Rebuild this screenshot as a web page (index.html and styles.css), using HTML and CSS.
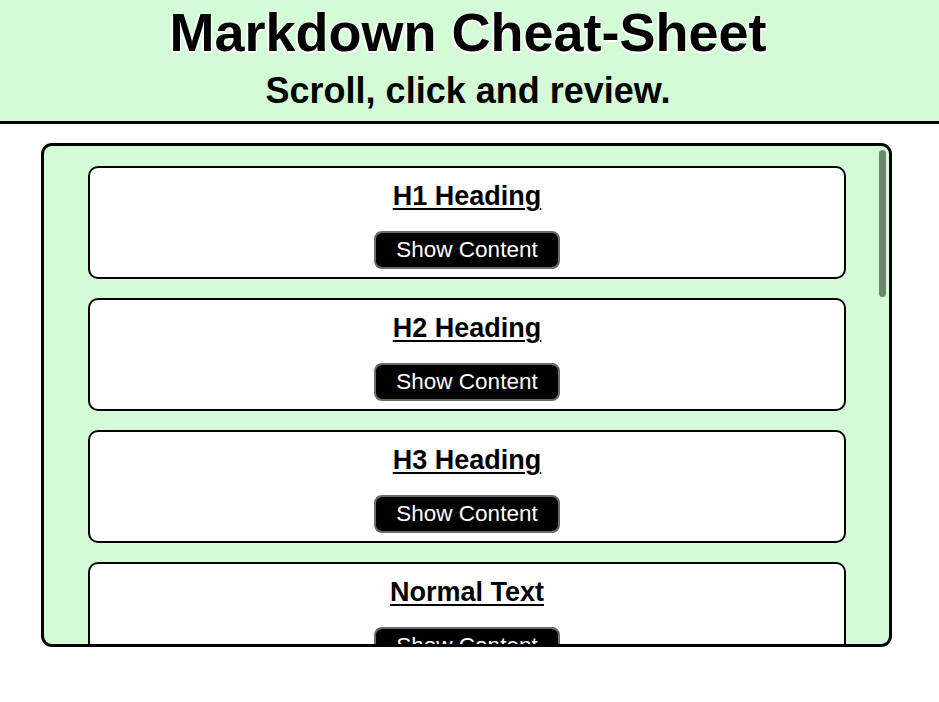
FILE: index.html
```html
<!DOCTYPE html>
<html lang="en">
<head>
<meta charset="utf-8">
<title>Markdown Cheat-Sheet</title>
<link rel="stylesheet" href="styles.css">
</head>
<body>
<header class="page-header">
  <h1 class="title">Markdown Cheat-Sheet</h1>
  <h2 class="subtitle">Scroll, click and review.</h2>
</header>
<main class="sheet">
  <div class="sheet-scroll">
    <section class="card"><h3 class="card-title">H1 Heading</h3><button class="show-btn">Show Content</button></section>
    <section class="card"><h3 class="card-title">H2 Heading</h3><button class="show-btn">Show Content</button></section>
    <section class="card"><h3 class="card-title">H3 Heading</h3><button class="show-btn">Show Content</button></section>
    <section class="card"><h3 class="card-title">Normal Text</h3><button class="show-btn">Show Content</button></section>
    <section class="card"><h3 class="card-title">Bold Text</h3><button class="show-btn">Show Content</button></section>
    <section class="card"><h3 class="card-title">Italic Text</h3><button class="show-btn">Show Content</button></section>
    <section class="card"><h3 class="card-title">Blockquote</h3><button class="show-btn">Show Content</button></section>
    <section class="card"><h3 class="card-title">Ordered List</h3><button class="show-btn">Show Content</button></section>
    <section class="card"><h3 class="card-title">Unordered List</h3><button class="show-btn">Show Content</button></section>
    <section class="card"><h3 class="card-title">Code</h3><button class="show-btn">Show Content</button></section>
    <section class="card"><h3 class="card-title">Horizontal Rule</h3><button class="show-btn">Show Content</button></section>
    <section class="card"><h3 class="card-title">Link</h3><button class="show-btn">Show Content</button></section>
    <section class="card"><h3 class="card-title">Image</h3><button class="show-btn">Show Content</button></section>
  </div>
  <div class="scroll-thumb" aria-hidden="true"></div>
</main>
</body>
</html>
```

FILE: styles.css
```css
* {
  box-sizing: border-box;
}

body {
  margin: 0;
  background: #ffffff;
  font-family: "Liberation Sans", Arial, Helvetica, sans-serif;
  color: #000;
}

.page-header {
  background: #d3fbd6;
  border-bottom: 3px solid #000;
  padding: 1px 3px 9px 0;
  text-align: center;
}

.title {
  margin: 0;
  font-size: 54px;
  line-height: 62px;
  font-weight: bold;
  text-shadow: 0 0 2px #fff, 1px 2px 1px #fff, -1px 2px 1px #fff, -2px 1px 1px #fff;
}

.subtitle {
  margin: 7px 0 0;
  font-size: 36px;
  line-height: 42px;
  font-weight: bold;
}

.sheet {
  position: relative;
  margin: 19px 0 0 41px;
  width: 851px;
  height: 504px;
  background: #d3fbd6;
  border: 3px solid #000;
  border-radius: 11px;
  overflow: hidden;
}

.sheet-scroll {
  height: 100%;
  overflow-y: scroll;
  scrollbar-width: none;
  padding: 20px 43px 20px 44px;
  display: flex;
  flex-direction: column;
  gap: 19px;
}

.sheet-scroll::-webkit-scrollbar {
  display: none;
}

.scroll-thumb {
  position: absolute;
  top: 4px;
  right: 3px;
  width: 7px;
  height: 147px;
  border-radius: 4px;
  background: #6c856f;
}

.card {
  flex: none;
  height: 113px;
  background: #fff;
  border: 2px solid #000;
  border-radius: 10px;
  padding: 13px 0 8px;
  display: flex;
  flex-direction: column;
  align-items: center;
}

.card-title {
  margin: 0;
  font-size: 27px;
  line-height: 30px;
  font-weight: bold;
  text-decoration: underline;
  text-decoration-thickness: 2px;
  text-underline-offset: 3px;
}

.show-btn {
  margin-top: 20px;
  height: 38px;
  padding: 5px 20px;
  background: #000;
  color: #fff;
  border: 2px solid #6b6b6b;
  border-radius: 8px;
  font-family: "Liberation Sans", Arial, Helvetica, sans-serif;
  font-size: 22.5px;
  line-height: 24px;
}
```
